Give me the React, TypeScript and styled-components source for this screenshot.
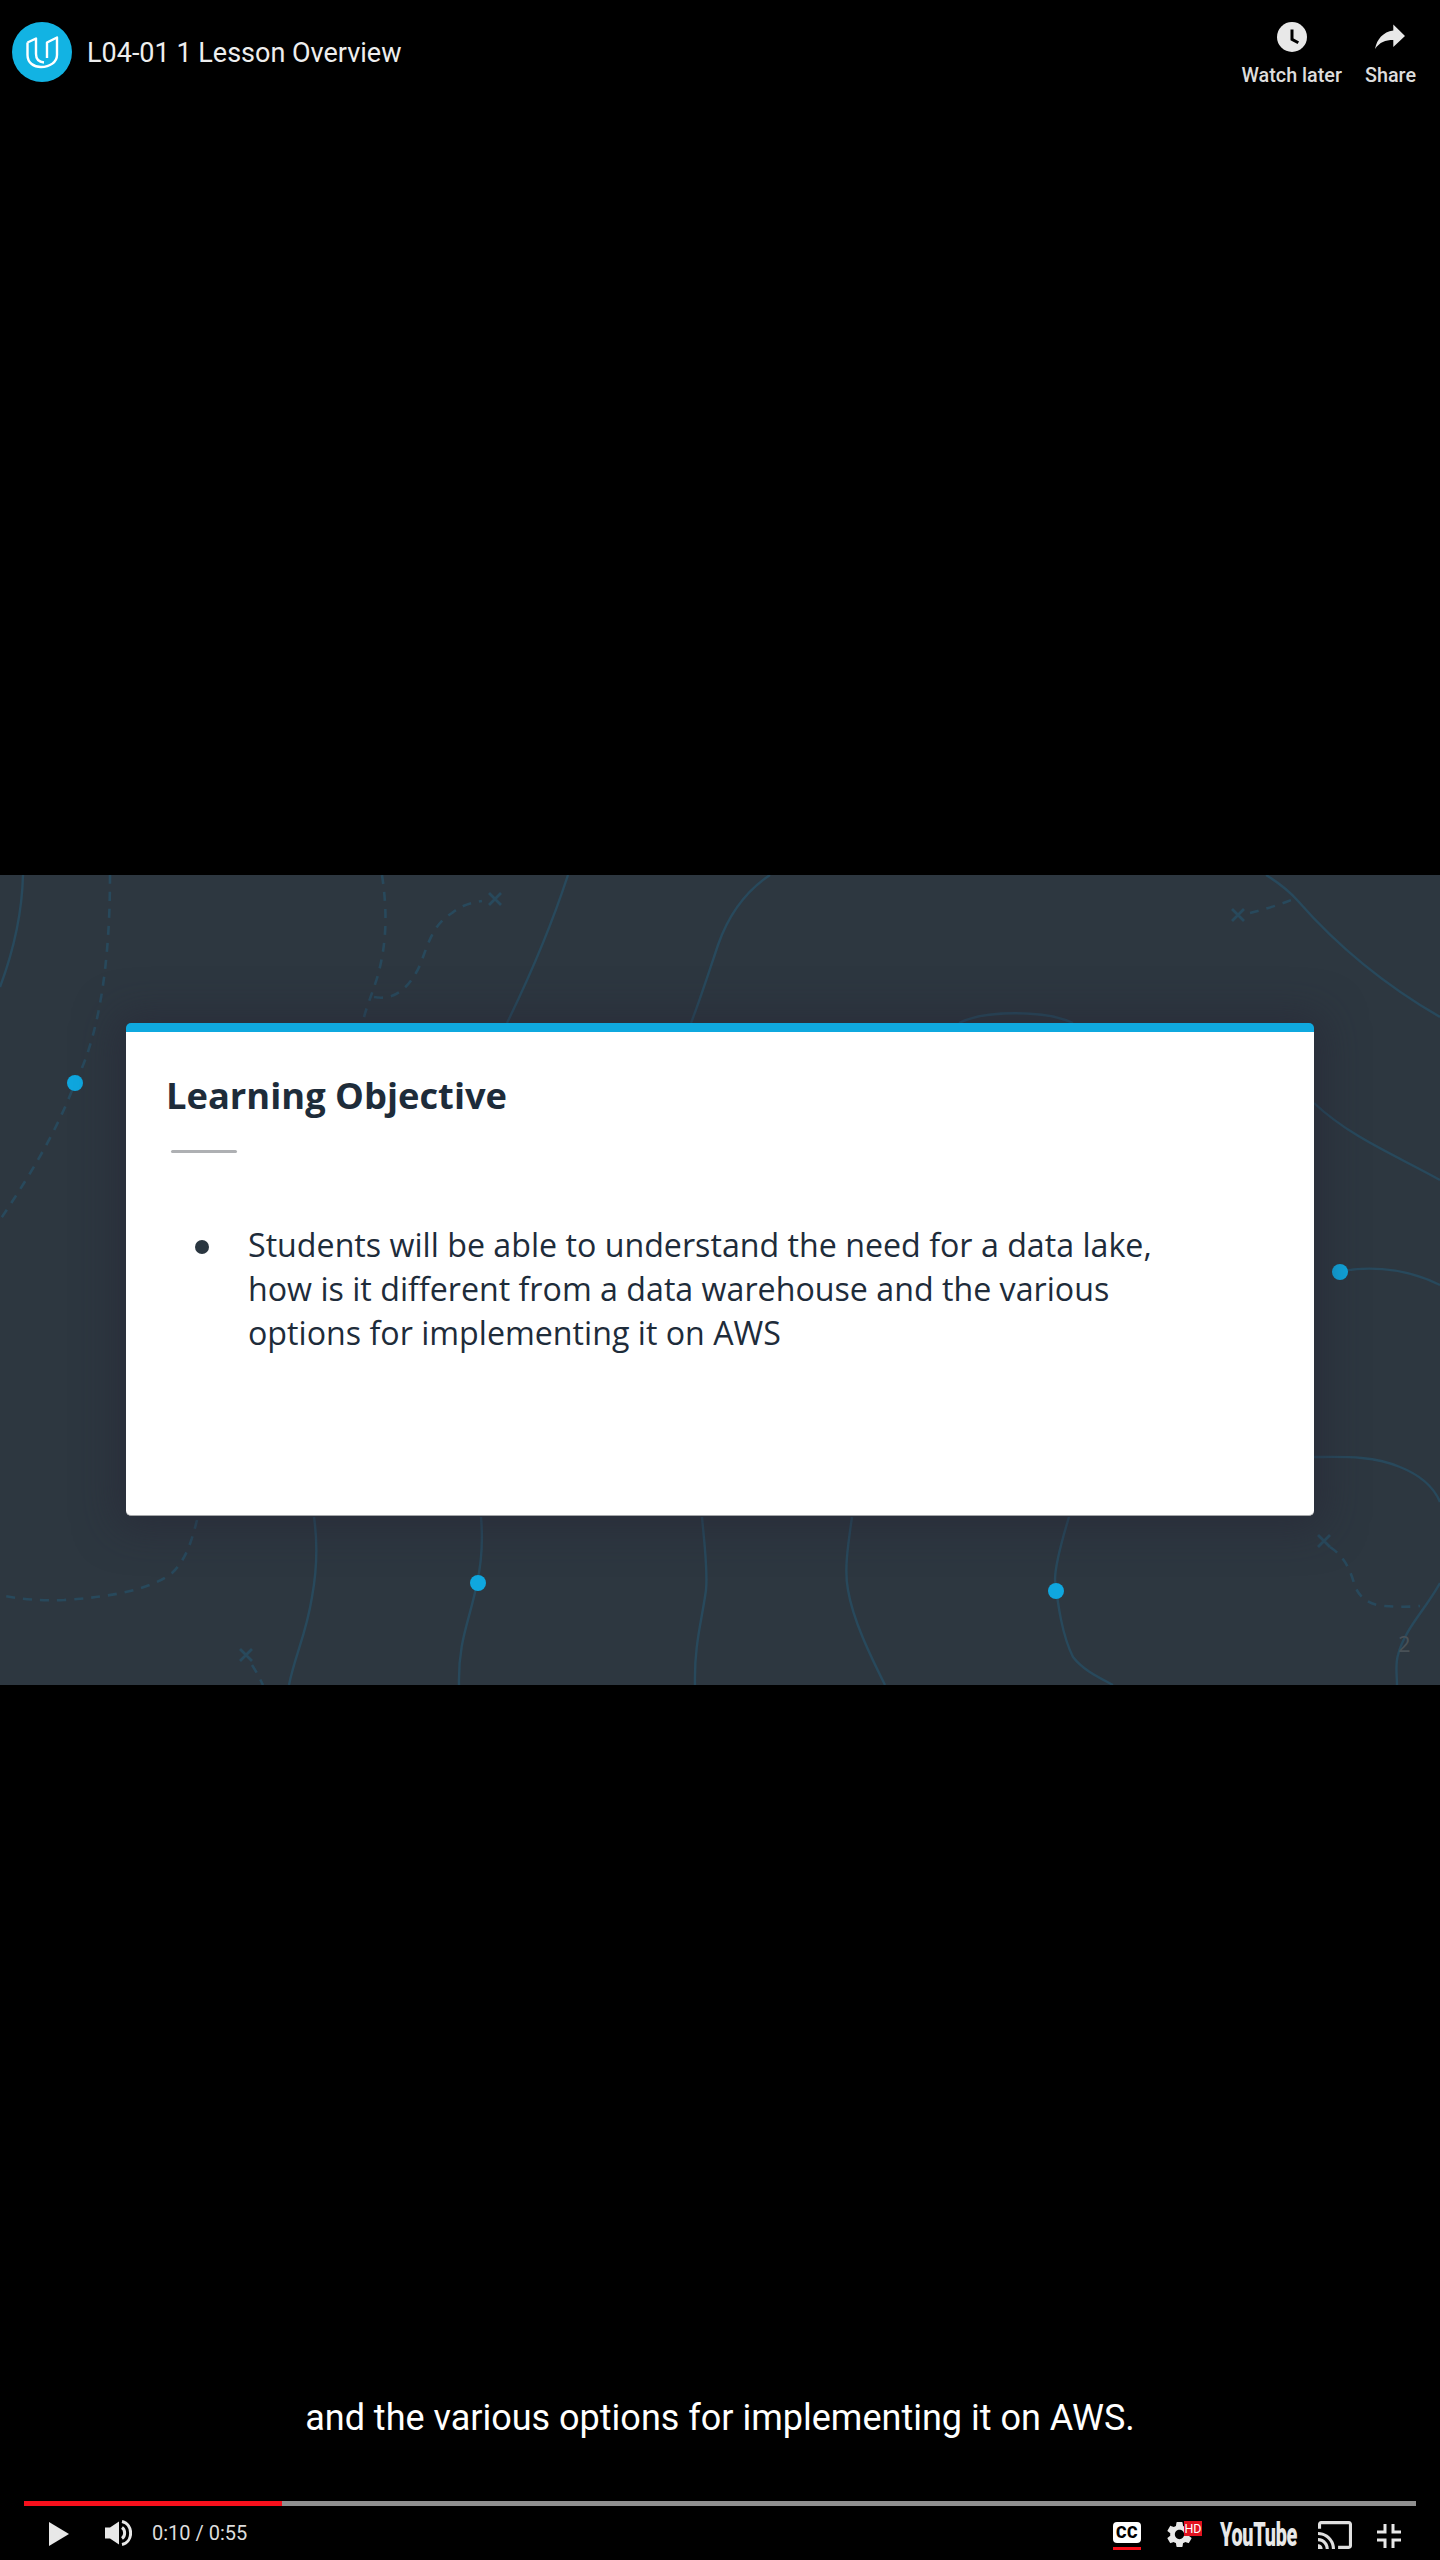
import React from "react";
import styled, { createGlobalStyle } from "styled-components";
import { MdSettings } from "react-icons/md";

const Global = createGlobalStyle`
  html, body { margin: 0; padding: 0; background: #000; }
  * { box-sizing: border-box; }
`;

const Page = styled.div`
  width: 1440px;
  height: 2560px;
  background: #000;
  display: grid;
  grid-template-rows: 875px 810px 875px;
  font-family: Roboto, "Liberation Sans", sans-serif;
  overflow: hidden;
`;

const TopBar = styled.header`
  display: flex;
  justify-content: space-between;
  align-items: flex-start;
  padding: 21px 24px 0 12px;
`;

const TitleGroup = styled.div`
  display: flex;
  align-items: center;
  gap: 15px;
  height: 62px;
`;

const VideoTitle = styled.h1`
  margin: 2px 0 0;
  font-size: 27px;
  font-weight: 400;
  color: #eeeeee;
  line-height: 32px;
  white-space: nowrap;
`;

const TopActions = styled.div`
  display: flex;
  gap: 23px;
`;

const TopAction = styled.div`
  display: flex;
  flex-direction: column;
  align-items: center;
  gap: 12px;
  color: #dddddd;
  font-size: 19.8px;
  font-weight: 500;
  line-height: 22px;
  white-space: nowrap;
`;

const ActionIcon = styled.div`
  height: 32px;
  display: flex;
  align-items: center;
  justify-content: center;
`;

const Frame = styled.section`
  position: relative;
  background: #2d3740;
  padding: 148px 126px 169px 126px;
  display: flex;
  overflow: hidden;
`;

const Contours = styled.svg`
  position: absolute;
  inset: 0;
  width: 100%;
  height: 100%;
`;

const PageMark = styled.span`
  position: absolute;
  left: 1398px;
  top: 755px;
  font-family: "Open Sans", sans-serif;
  font-size: 22px;
  line-height: 26px;
  color: #495157;
`;

const Card = styled.article`
  position: relative;
  flex: 1;
  background: #fff;
  border-top: 9px solid #0fa9df;
  border-bottom: 1px solid #a5a7a9;
  border-radius: 5px;
  box-shadow: 0 2px 40px 10px rgba(37, 36, 52, 0.5);
  padding: 38px 41px 0 40px;
  font-family: "Open Sans", sans-serif;
`;

const CardTitle = styled.h2`
  margin: 0;
  font-size: 36.3px;
  line-height: 50px;
  font-weight: 700;
  color: #1e2c3a;
`;

const Rule = styled.div`
  width: 66px;
  height: 3px;
  margin: 30px 0 0 5px;
  background: #aeb0b3;
  border-radius: 2px;
`;

const Objectives = styled.ul`
  list-style: none;
  margin: 70px 0 0;
  padding: 0 0 0 29px;
`;

const Objective = styled.li`
  display: flex;
  gap: 39px;
  font-size: 32.2px;
  line-height: 43.8px;
  color: #1e2c3a;
`;

const Bullet = styled.span`
  flex: none;
  width: 14px;
  height: 14px;
  margin-top: 17px;
  border-radius: 50%;
  background: #2a3640;
`;

const Footer = styled.footer`
  display: flex;
  flex-direction: column;
  justify-content: flex-end;
`;

const Caption = styled.p`
  margin: 0 0 60px;
  text-align: center;
  font-size: 36px;
  line-height: 46px;
  color: #fff;
`;

const Track = styled.div`
  height: 5px;
  margin: 0 24px;
  background: #8f8f8f;
`;

const Played = styled.div`
  height: 100%;
  background: #f8101c;
`;

const Controls = styled.div`
  height: 54px;
  display: flex;
  justify-content: space-between;
  align-items: flex-start;
  padding: 13px 39px 0 49px;
`;

const ControlGroup = styled.div`
  display: flex;
  align-items: center;
`;

const PlayIcon = styled.svg`
  display: block;
  margin: 2px 36px 0 0;
`;

const VolumeIcon = styled.svg`
  display: block;
  margin: 1px 20px 0 0;
`;

const TimeLabel = styled.span`
  font-size: 20px;
  line-height: 26px;
  color: #dddddd;
  white-space: nowrap;
`;

const CcButton = styled.div`
  width: 28px;
  margin-right: 26px;
  display: flex;
  flex-direction: column;
  gap: 4px;
`;

const CcBadge = styled.span`
  height: 21px;
  margin-top: 3px;
  background: #fff;
  border-radius: 4px;
  color: #000;
  font-size: 16px;
  font-weight: 900;
  line-height: 21px;
  text-align: center;
  letter-spacing: 0.5px;
`;

const CcUnderline = styled.span`
  height: 3px;
  background: #f8101c;
`;

const GearWrap = styled.div`
  position: relative;
  width: 35px;
  height: 31px;
  margin-right: 18px;
  color: #e8e8e8;
`;

const Gear = styled(MdSettings)`
  position: absolute;
  left: -3px;
  top: 0;
  width: 31px;
  height: 31px;
`;

const HdBadge = styled.span`
  position: absolute;
  left: 17px;
  top: 2px;
  width: 18px;
  height: 15px;
  background: #e1121f;
  color: #fff;
  font-size: 12.5px;
  font-weight: 400;
  line-height: 15px;
  text-align: center;
`;

const YouTubeMark = styled.span`
  width: 77px;
  margin-right: 21px;
  font-size: 33px;
  font-weight: 900;
  line-height: 30px;
  letter-spacing: -0.5px;
  color: #e8e8e8;
  white-space: nowrap;
  display: inline-block;
  transform: scaleX(0.6);
  transform-origin: left center;
`;

const CastIcon = styled.svg`
  display: block;
  margin-right: 25px;
`;

const ExitIcon = styled.svg`
  display: block;
  margin-top: 2px;
`;

const line = "#28495c";

const solidPaths = [
  "M23 0C22 40 12 80 0 112",
  "M568 0C550 55 528 105 507 148",
  "M770 0C740 20 725 50 718 70C708 100 700 125 691 148",
  "M959 148C985 135 1045 135 1073 148",
  "M1266 0C1279 8 1289 16 1298 26C1340 74 1388 112 1440 142",
  "M1314 228C1350 262 1395 280 1440 305",
  "M1339 397C1360 392 1400 390 1440 410",
  "M1314 582C1340 582 1372 580 1400 592C1425 602 1435 615 1440 627",
  "M314 642C318 670 316 700 312 722C306 760 295 780 289 810",
  "M481 642C483 665 481 690 477 708C470 745 458 765 459 810",
  "M702 642C704 665 708 695 706 715C702 745 694 770 695 810",
  "M852 642C848 670 844 695 848 715C853 745 870 780 885 810",
  "M1069 642C1062 665 1055 690 1055 705C1058 730 1062 760 1073 782C1083 795 1098 802 1113 810",
  "M1440 708C1425 735 1404 755 1398 780C1395 790 1397 800 1397 810",
];

const dashedPaths = [
  "M110 0C110 60 105 150 75 208C55 260 30 300 0 345",
  "M382 0C388 40 386 70 378 100C372 120 365 135 363 147",
  "M374 122C395 126 410 112 420 90C428 70 432 50 452 38C462 30 470 28 482 26",
  "M1250 38C1265 34 1280 30 1296 23",
  "M197 645C192 665 186 685 172 698C150 715 110 722 64 725C40 726 20 724 5 721",
  "M252 790C256 796 259 802 263 810",
  "M1330 672C1345 682 1350 695 1354 708C1358 722 1368 730 1385 731C1395 732 1410 732 1420 731",
];

const crosses: [number, number][] = [
  [495, 24],
  [1238, 40],
  [246, 780],
  [1324, 666],
];

const dots: [number, number][] = [
  [75, 208],
  [478, 708],
  [1056, 716],
  [1340, 397],
];

function FrameArt() {
  return (
    <Contours viewBox="0 0 1440 810" fill="none" aria-hidden="true">
      {solidPaths.map((d) => (
        <path key={d} d={d} stroke={line} strokeWidth="2.4" />
      ))}
      {dashedPaths.map((d) => (
        <path key={d} d={d} stroke={line} strokeWidth="2.6" strokeDasharray="9 8" />
      ))}
      {crosses.map(([x, y]) => (
        <path
          key={x}
          d={`M${x - 6} ${y - 6}L${x + 6} ${y + 6}M${x + 6} ${y - 6}L${x - 6} ${y + 6}`}
          stroke={line}
          strokeWidth="2.8"
        />
      ))}
      {dots.map(([x, y]) => (
        <circle key={x} cx={x} cy={y} r="8" fill="#0fa7df" />
      ))}
    </Contours>
  );
}

function UdacityLogo() {
  return (
    <svg width="60" height="60" viewBox="0 0 60 60" fill="none" aria-hidden="true">
      <circle cx="30" cy="30" r="30" fill="#12b3e3" />
      <path
        d="M15.5 20.5L24 16.5V32C24 37 27 40 32 40.5M15.5 20.5V33C15.5 41 22 45 29 45C38 45 45 40 45 33V15.5L35 20.5V36"
        stroke="#fff"
        strokeWidth="2.4"
        strokeLinejoin="round"
      />
    </svg>
  );
}

function ClockIcon() {
  return (
    <svg width="30" height="30" viewBox="0 0 30 30" aria-hidden="true">
      <circle cx="15" cy="15" r="15" fill="#e8e8e8" />
      <path d="M15 7.5V17.3L21.3 20.8" fill="none" stroke="#000" strokeWidth="3" />
    </svg>
  );
}

function ShareIcon() {
  return (
    <svg width="30" height="26" viewBox="0 0 30 26" aria-hidden="true">
      <path d="M30 12L18.3 .5V6.5C8 8 2 15 0 25C5 18 10 16 18.3 16V23Z" fill="#e8e8e8" />
    </svg>
  );
}

export default function App() {
  return (
    <Page>
      <Global />
      <TopBar>
        <TitleGroup>
          <UdacityLogo />
          <VideoTitle>L04-01 1 Lesson Overview</VideoTitle>
        </TitleGroup>
        <TopActions>
          <TopAction>
            <ActionIcon>
              <ClockIcon />
            </ActionIcon>
            Watch later
          </TopAction>
          <TopAction>
            <ActionIcon>
              <ShareIcon />
            </ActionIcon>
            Share
          </TopAction>
        </TopActions>
      </TopBar>

      <Frame>
        <FrameArt />
        <PageMark>2</PageMark>
        <Card>
          <CardTitle>Learning Objective</CardTitle>
          <Rule />
          <Objectives>
            <Objective>
              <Bullet />
              <span>
                Students will be able to understand the need for a data lake,
                <br />
                how is it different from a data warehouse and the various
                <br />
                options for implementing it on AWS
              </span>
            </Objective>
          </Objectives>
        </Card>
      </Frame>

      <Footer>
        <Caption>and the various options for implementing it on AWS.</Caption>
        <Track>
          <Played style={{ width: "18.53%" }} />
        </Track>
        <Controls>
          <ControlGroup>
            <PlayIcon width="20" height="24" viewBox="0 0 20 24" aria-hidden="true">
              <path d="M0 0L20 12L0 24Z" fill="#e8e8e8" />
            </PlayIcon>
            <VolumeIcon width="27" height="26" viewBox="0 0 27 26" fill="none" aria-hidden="true">
              <path d="M0 7.5H5L14 1.5V24.5L5 18.5H0Z" fill="#e8e8e8" />
              <path d="M17 7.5C20.5 10 20.5 16 17 18.5" stroke="#e8e8e8" strokeWidth="3" />
              <path d="M17 1.5C28.5 4 28.5 22 17 24.5" stroke="#e8e8e8" strokeWidth="3" />
            </VolumeIcon>
            <TimeLabel>0:10 / 0:55</TimeLabel>
          </ControlGroup>
          <ControlGroup>
            <CcButton>
              <CcBadge>CC</CcBadge>
              <CcUnderline />
            </CcButton>
            <GearWrap>
              <Gear />
              <HdBadge>HD</HdBadge>
            </GearWrap>
            <YouTubeMark>YouTube</YouTubeMark>
            <CastIcon width="34" height="28" viewBox="1 3 22 18" aria-hidden="true">
              <path
                d="M21 3H3c-1.1 0-2 .9-2 2v3h2V5h18v14h-7v2h7c1.1 0 2-.9 2-2V5c0-1.1-.9-2-2-2zM1 18v3h3c0-1.66-1.34-3-3-3zm0-4v2c2.76 0 5 2.24 5 5h2c0-3.87-3.13-7-7-7zm0-4v2c4.97 0 9 4.03 9 9h2c0-6.08-4.93-11-11-11z"
                fill="#e0e0e0"
              />
            </CastIcon>
            <ExitIcon width="24" height="24" viewBox="0 0 24 24" fill="none" aria-hidden="true">
              <path
                d="M0 8H8V0M16 0V8H24M0 16H8V24M24 16H16V24"
                stroke="#e8e8e8"
                strokeWidth="3"
              />
            </ExitIcon>
          </ControlGroup>
        </Controls>
      </Footer>
    </Page>
  );
}
